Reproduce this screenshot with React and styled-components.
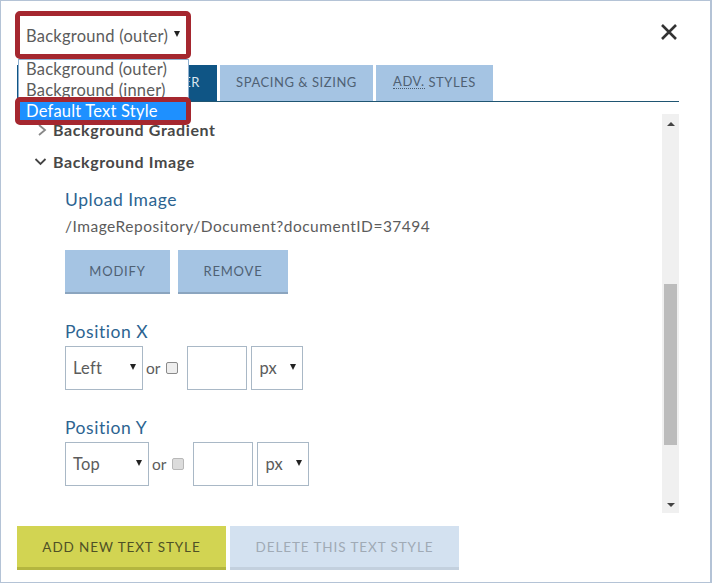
import React from 'react';
import styled, { createGlobalStyle } from 'styled-components';

const GlobalStyle = createGlobalStyle`
	html, body {
		margin: 0;
		padding: 0;
		background: #fff;
	}
	* {
		box-sizing: border-box;
	}
`;

const App = () => (
	<Frame>
		<GlobalStyle />
		<Header>
			<Select $width={170} $height={39} $noBorder>
				<span>Background (outer)</span>
				<Caret />
			</Select>
			<Close viewBox="0 0 16 16">
				<path d="M1 1 L15 15 M15 1 L1 15" />
			</Close>
			<Highlight $top={11} $height={48} />
			<Dropdown>
				<Option>Background (outer)</Option>
				<Option>Background (inner)</Option>
				<Option $active>Default Text Style</Option>
			</Dropdown>
			<Highlight $top={97} $height={28} />
		</Header>

		<Tabs>
			<Tab $width={200} $active>BORDER</Tab>
			<Tab $width={153}>SPACING &amp; SIZING</Tab>
			<Tab $width={117}>
				<Abbr>ADV.</Abbr> STYLES
			</Tab>
		</Tabs>

		<Panel>
			<Content>
				<Accordion>
					<Chevron viewBox="0 0 10 12" $collapsed>
						<path d="M2 1 L8 6 L2 11" />
					</Chevron>
					Background Gradient
				</Accordion>
				<Accordion>
					<Chevron viewBox="0 0 12 10">
						<path d="M1 2 L6 7 L11 2" />
					</Chevron>
					Background Image
				</Accordion>

				<Fields>
					<Label>Upload Image</Label>
					<Path>/ImageRepository/Document?documentID=37494</Path>
					<Buttons>
						<SmallButton $width={105}>MODIFY</SmallButton>
						<SmallButton $width={110}>REMOVE</SmallButton>
					</Buttons>

					<PositionLabel>Position X</PositionLabel>
					<Controls>
						<Select $width={78}>
							<span>Left</span>
							<Caret />
						</Select>
						<Or>or</Or>
						<Check />
						<NumberInput />
						<Select $width={52}>
							<span>px</span>
							<Caret />
						</Select>
					</Controls>

					<PositionLabel>Position Y</PositionLabel>
					<Controls>
						<Select $width={84}>
							<span>Top</span>
							<Caret />
						</Select>
						<Or>or</Or>
						<Check $disabled />
						<NumberInput />
						<Select $width={52}>
							<span>px</span>
							<Caret />
						</Select>
					</Controls>
				</Fields>
			</Content>
			<Scrollbar>
				<ArrowUp />
				<Thumb />
				<ArrowDown />
			</Scrollbar>
		</Panel>

		<Footer>
			<FooterButton $width={209} $bg="#d2d452" $edge="#b4b63f" $color="#4f5126">
				ADD NEW TEXT STYLE
			</FooterButton>
			<FooterButton $width={229} $bg="#d3e1f0" $edge="#c3d0de" $color="#a0aab5">
				DELETE THIS TEXT STYLE
			</FooterButton>
		</Footer>
	</Frame>
);

const font = `'Lato', 'Open Sans', sans-serif`;

const Frame = styled.div`
	width: 712px;
	height: 583px;
	overflow: hidden;
	padding: 0 31px 0 16px;
	background: #fff;
	border: 1px solid #b4c3d6;
	border-right-width: 2px;
	font-family: ${font};
	color: #555;
`;

const Header = styled.div`
	display: flex;
	align-items: flex-start;
	justify-content: space-between;
	height: 64px;
	padding-top: 15px;
`;

const Select = styled.div`
	display: flex;
	align-items: center;
	justify-content: space-between;
	flex: none;
	width: ${props => props.$width}px;
	height: ${props => props.$height || 44}px;
	padding: 0 6px 0 ${props => (props.$noBorder ? '8px' : '7px')};
	border: 1px solid ${props => (props.$noBorder ? 'transparent' : '#a9b8c6')};
	font-size: 16.5px;
	letter-spacing: 0.25px;
	color: #5c5c5c;
	background: #fff;
`;

const Caret = styled.i`
	display: block;
	width: 0;
	height: 0;
	margin-top: -3px;
	border-left: 3.5px solid transparent;
	border-right: 3.5px solid transparent;
	border-top: 6px solid #222;
`;

const Close = styled.svg`
	width: 16px;
	height: 16px;
	margin: 8px 2px 0 0;
	fill: none;
	stroke: #333;
	stroke-width: 2.6;
`;

const Highlight = styled.div`
	position: absolute;
	left: 15px;
	top: ${props => props.$top}px;
	width: 176px;
	height: ${props => props.$height}px;
	border: 5px solid #a5272f;
	border-radius: 5px;
	z-index: 3;
`;

const Dropdown = styled.div`
	position: absolute;
	left: 18px;
	top: 59px;
	width: 171px;
	background: #fff;
	border: 1px solid #8fb0d0;
	z-index: 2;
`;

const Option = styled.div`
	height: 21px;
	padding-left: 7px;
	font-size: 16.5px;
	letter-spacing: 0.2px;
	line-height: 19px;
	color: ${props => (props.$active ? '#fff' : '#5c5c5c')};
	background: ${props => (props.$active ? '#1e90ff' : 'transparent')};
`;

const Tabs = styled.div`
	display: flex;
	gap: 3px;
	height: 37px;
	border-bottom: 1px solid #1f5572;
`;

const Tab = styled.div`
	display: flex;
	align-items: center;
	justify-content: ${props => (props.$active ? 'flex-end' : 'center')};
	width: ${props => props.$width}px;
	padding-right: ${props => (props.$active ? '17px' : '0')};
	padding-bottom: 3px;
	background: ${props => (props.$active ? '#0f5585' : '#a5c4e3')};
	color: ${props => (props.$active ? '#dbe6f0' : '#4f6174')};
	font-size: 13px;
	letter-spacing: 0.55px;
	white-space: pre;
`;

const Abbr = styled.span`
	border-bottom: 1px dotted #4b5d70;
	line-height: 14px;
`;

const Panel = styled.div`
	display: flex;
	height: 399px;
	margin-top: 12px;
`;

const Content = styled.div`
	flex: 1;
	overflow: hidden;
`;

const Accordion = styled.div`
	display: flex;
	align-items: center;
	height: 32px;
	padding: 0 0 2px 36px;
	position: relative;
	font-size: 16px;
	font-weight: 700;
	letter-spacing: 0.6px;
	color: #484848;
`;

const Chevron = styled.svg`
	position: absolute;
	left: ${props => (props.$collapsed ? '20px' : '17px')};
	top: ${props => (props.$collapsed ? '10px' : '11px')};
	width: ${props => (props.$collapsed ? '10px' : '13px')};
	height: ${props => (props.$collapsed ? '12px' : '10px')};
	fill: none;
	stroke: ${props => (props.$collapsed ? '#888' : '#444')};
	stroke-width: 1.8;
`;

const Fields = styled.div`
	padding: 10px 0 0 48px;
`;

const Label = styled.div`
	height: 26px;
	font-size: 17.5px;
	letter-spacing: 0.55px;
	line-height: 24px;
	color: #2c6491;
`;

const Path = styled.div`
	height: 24px;
	font-size: 15.5px;
	letter-spacing: 0.5px;
	line-height: 24px;
	color: #5c5c5c;
`;

const Buttons = styled.div`
	display: flex;
	gap: 8px;
	margin-top: 12px;
`;

const SmallButton = styled.div`
	display: flex;
	align-items: center;
	justify-content: center;
	width: ${props => props.$width}px;
	height: 44px;
	background: #a5c4e3;
	border-bottom: 2px solid #8ba5bf;
	color: #4f6174;
	font-size: 13px;
	letter-spacing: 0.8px;
`;

const PositionLabel = styled(Label)`
	margin-top: 26px;
`;

const Controls = styled.div`
	display: flex;
	align-items: center;
	height: 44px;
`;

const Or = styled.span`
	margin: 0 6px 0 3px;
	font-size: 15.5px;
	color: #5c5c5c;
`;

const Check = styled.div`
	flex: none;
	width: 12px;
	height: 12px;
	margin-top: -1px;
	border: 1px solid ${props => (props.$disabled ? '#b8b8b8' : '#8a8a8a')};
	border-radius: 2px;
	background: ${props => (props.$disabled ? '#dcdcdc' : '#eee')};
`;

const NumberInput = styled.div`
	flex: none;
	width: 60px;
	height: 44px;
	margin: 0 4px 0 9px;
	background: #fff;
	border: 1px solid #a9b8c6;
`;

const Scrollbar = styled.div`
	display: flex;
	flex-direction: column;
	align-items: center;
	flex: none;
	width: 17px;
	background: #f0f0f0;
`;

const ArrowUp = styled.i`
	width: 0;
	height: 0;
	margin-top: 8px;
	border-left: 4px solid transparent;
	border-right: 4px solid transparent;
	border-bottom: 4px solid #444;
`;

const ArrowDown = styled.i`
	width: 0;
	height: 0;
	margin-top: 58px;
	border-left: 4px solid transparent;
	border-right: 4px solid transparent;
	border-top: 4px solid #444;
`;

const Thumb = styled.div`
	width: 13px;
	height: 161px;
	margin-top: 158px;
	background: #bcbcbc;
`;

const Footer = styled.div`
	display: flex;
	gap: 4px;
	margin-top: 13px;
`;

const FooterButton = styled.div`
	display: flex;
	align-items: center;
	justify-content: center;
	width: ${props => props.$width}px;
	height: 44px;
	background: ${props => props.$bg};
	border-bottom: 3px solid ${props => props.$edge};
	color: ${props => props.$color};
	font-size: 13.5px;
	letter-spacing: 0.9px;
`;

export default App;
